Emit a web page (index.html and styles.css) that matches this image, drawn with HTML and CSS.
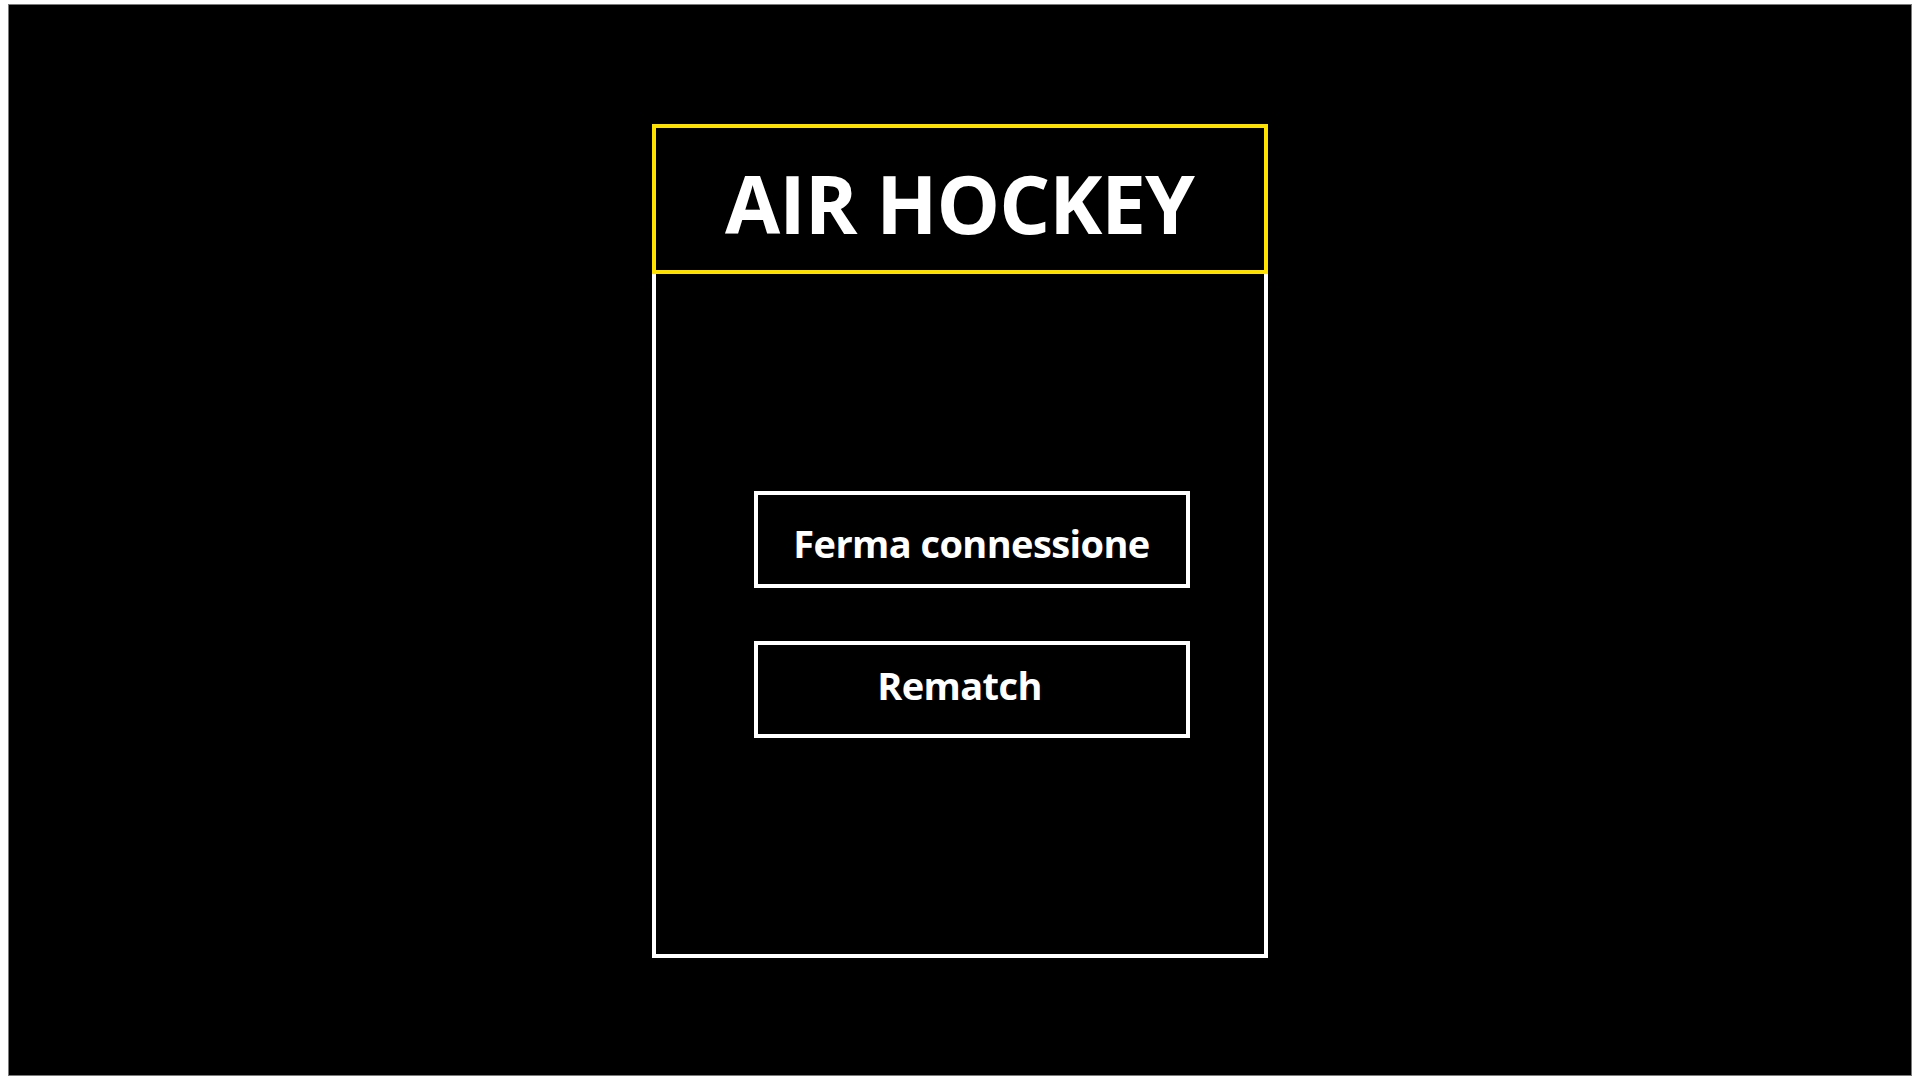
FILE: index.html
```html
<!DOCTYPE html>
<html lang="it">
<head>
<meta charset="utf-8">
<title>Air Hockey</title>
<link rel="stylesheet" href="styles.css">
</head>
<body>
<div class="frame">
  <div class="panel">
    <div class="header"><h1 class="title">AIR HOCKEY</h1></div>
    <div class="body">
      <div class="menu">
        <button class="btn btn-stop">Ferma connessione</button>
        <button class="btn btn-rematch">Rematch</button>
      </div>
    </div>
  </div>
</div>
</body>
</html>
```
FILE: styles.css
```css
html, body {
  margin: 0;
  padding: 0;
  background: #ffffff;
}
body {
  padding: 4px 8px 0 8px;
  width: 1920px;
  height: 1080px;
  box-sizing: border-box;
  overflow: hidden;
}
.frame {
  width: 1904px;
  height: 1072px;
  box-sizing: border-box;
  border: 1px solid #7a7a7a;
  background: #000000;
  display: flex;
  justify-content: center;
  padding-top: 119px;
}
.panel {
  width: 616px;
  margin-left: -1px;
  display: flex;
  flex-direction: column;
}
.header {
  height: 150px;
  box-sizing: border-box;
  border: 4px solid #ffe100;
  display: flex;
  align-items: center;
  justify-content: center;
}
.title {
  margin: 0;
  color: #ffffff;
  font-family: "Open Sans", "Noto Sans", sans-serif;
  font-weight: 700;
  font-size: 80px;
  letter-spacing: -1px;
  line-height: 1;
  padding-top: 8px;
}
.body {
  height: 684px;
  box-sizing: border-box;
  border: 4px solid #ffffff;
  border-top: none;
  padding: 217px 74px 0 98px;
}
.menu {
  display: flex;
  flex-direction: column;
  gap: 53px;
}
.btn {
  height: 97px;
  box-sizing: border-box;
  border: 4px solid #ffffff;
  background: #000000;
  color: #ffffff;
  font-family: "Open Sans", "Noto Sans", sans-serif;
  font-weight: 700;
  font-size: 38px;
  letter-spacing: -0.6px;
  padding: 0;
  margin: 0;
  cursor: pointer;
}
.btn-stop {
  padding-top: 6px;
}
.btn-rematch {
  padding-right: 24px;
  padding-bottom: 9px;
}
```
